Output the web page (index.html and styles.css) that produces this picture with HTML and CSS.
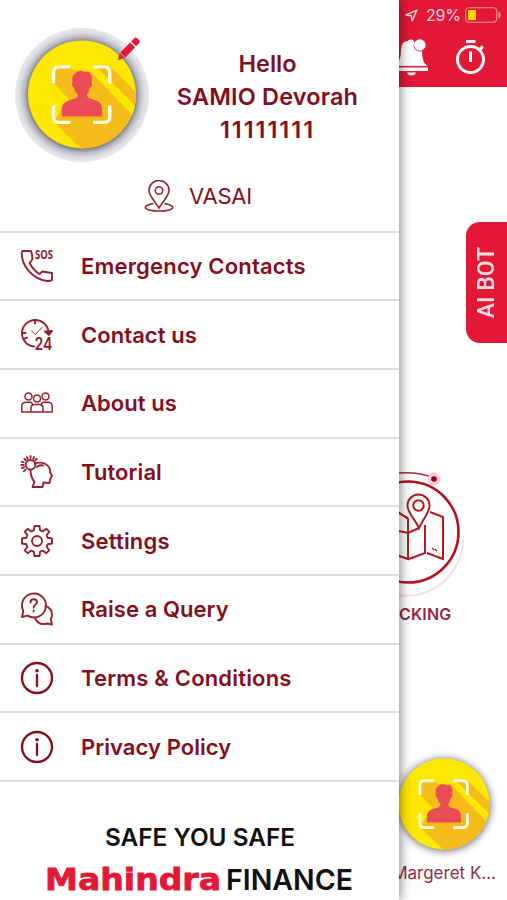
FILE: index.html
```html
<!DOCTYPE html>
<html lang="en">
<head>
<meta charset="utf-8">
<title>Menu</title>
<link rel="stylesheet" href="styles.css">
</head>
<body>
<svg class="defs" aria-hidden="true">
  <defs>
    <clipPath id="disc"><circle r="54"/></clipPath>
    <radialGradient id="halo" gradientUnits="userSpaceOnUse" cx="0" cy="0" r="68">
      <stop offset=".78" stop-color="#77777c"/>
      <stop offset=".85" stop-color="#b9b9c0"/>
      <stop offset=".92" stop-color="#dcdce3"/>
      <stop offset="1" stop-color="#ebebf0"/>
    </radialGradient>
    <g id="face">
      <circle r="54" fill="#ffe800"/>
      <g clip-path="url(#disc)" fill="#f5bb1b">
        <path d="M-28-28H-12L-8-24 8-24 62 30V70H16L-28 28-20 13-13 5-28-11Z"/>
        <path d="M14-28H28L60 4V28Z"/>
        <path d="M4-28H14L60 18V31Z" fill="#ffe800"/>
      </g>
      <path d="M-28.5-11V-22Q-28.5-27.5-23-27.5H-11.5M11-27.5H22Q27.700-27.500 27.700-22V-11M27.700 11V22.500Q27.700 28 22 28H11M-11.500 28H-23Q-28.500 28-28.500 22.500V11" fill="none" stroke="#fffbe0" stroke-width="3.400"/>
      <path d="M-20 22V14Q-20 8-13 6L-7 4Q-4 3-4 0-7-2-8-7-11-9-9.500-13-10.500-19-7-21-3-25 3-22 8-24 9-20 11-17 9.500-13 11-8 8-7 7-2 5 0 5 3 8 4L14 6Q20 8 20 14V22Z" fill="#e94c55"/>
    </g>
  </defs>
</svg>
<div class="screen">
  <aside class="drawer">
    <header class="profile">
      <div class="who">
        <svg class="avatar" viewBox="-68 -68 136 136">
          <circle r="67" fill="url(#halo)"/>
          <use href="#face" y="-.6"/>
          <g transform="translate(36 -35) rotate(-46)" fill="#e51636">
            <path d="M0 0 6-3.500V3.500Z"/><path d="M7-3.500H21V3.500H7ZM22.500-3.500H27Q29-3.500 29-1.500V1.500Q29 3.500 27 3.500H22.500Z"/>
          </g>
        </svg>
        <div class="greeting">
          <p class="hello">Hello</p>
          <p class="name">SAMIO Devorah</p>
          <p class="number">11111111</p>
        </div>
      </div>
      <div class="place">
        <svg class="pin" viewBox="0 0 32 32"><path d="M16 28C12 21 6 16 6 10.500a10 10 0 0 1 20 0C26 16 20 21 16 28Z"/><circle cx="16" cy="10.500" r="3.700"/><path d="M10.500 23.500C-3 26 1 31 16 31s19-5 5.500-7.500"/></svg>
        <span>VASAI</span>
      </div>
    </header>
    <nav class="menu">
      <a class="item">
        <svg class="icon" viewBox="0 0 32 32"><path d="M1.500 1H10Q12 7 11 10L8.500 13Q13 21 18.500 24L21.500 21.500 31 23V30Q30 31 26 31C11 29 0 15 .8 2Z"/><text class="sos" x="14" y="8.500" textLength="18" lengthAdjust="spacingAndGlyphs">SOS</text></svg>
        <span class="wide">Emergency Contacts</span>
      </a>
      <a class="item">
        <svg class="icon" viewBox="0 0 32 32"><path d="M13 27.500A13.300 13.300 0 1 1 27.500 13M14 1V4.500M1 14H4.500M3.800 19.500 6 18.700"/><path d="M10.500 12 14.500 15.500 21 8.500" class="thin"/><path d="M24 12.500 31 12 28 16Z" class="solid"/><text class="day" x="13.500" y="31" textLength="18" lengthAdjust="spacingAndGlyphs">24</text></svg>
        <span>Contact us</span>
      </a>
      <a class="item">
        <svg class="icon group" viewBox="0 0 32 32"><circle cx="7.500" cy="9.500" r="3.500"/><circle cx="16" cy="11.500" r="3.500"/><circle cx="24.500" cy="9.500" r="3.500"/><path d="M10 25H.8V19Q.8 15.200 5 15.200H10L11.500 17M22 25H31.200V19Q31.200 15.200 27 15.200H22L20.500 17M10 25V21Q10 17.500 14 17.500H18Q22 17.500 22 21V25Z"/></svg>
        <span>About us</span>
      </a>
      <a class="item">
        <svg class="icon" viewBox="0 0 32 32"><circle cx="9.500" cy="8.800" r="4.800"/><path d="M9.500 0V2M3.200 2.800 4.700 4.200M.3 9H2.600M2.800 15.200 4.500 13.700M14.300 4.200 15.800 2.800M6 1.200 6.800 3M13 1.200 12.300 3M.8 5.800 2.800 6.300M1 12 3 11.300"/><path d="M14 7.500Q19 5.500 24.500 8 29.500 11 29 16L31 20 29.500 22 28.500 27 22.500 26.500 21.500 31H11.500L13.500 26Q9.500 21 9.500 14"/><path d="M16 11Q18 8.500 22 9.500"/></svg>
        <span>Tutorial</span>
      </a>
      <a class="item">
        <svg class="icon" viewBox="0 0 32 32"><circle cx="16" cy="16" r="5"/><path d="M13.500 1H18.500L19.200 5.300 21.800 6.400 25.300 3.800 28.200 6.700 25.600 10.200 26.700 12.800 31 13.500V18.500L26.700 19.200 25.600 21.800 28.200 25.300 25.300 28.200 21.800 25.600 19.200 26.700 18.500 31H13.500L12.800 26.700 10.200 25.600 6.700 28.200 3.800 25.300 6.400 21.800 5.300 19.200 1 18.500V13.500L5.300 12.800 6.400 10.200 3.800 6.700 6.700 3.800 10.200 6.400 12.800 5.300Z"/></svg>
        <span class="wide">Settings</span>
      </a>
      <a class="item">
        <svg class="icon" viewBox="0 0 32 32"><path d="M1 24 2.300 18A12 12 0 1 1 6.500 22.600Z"/><path d="M24.300 13.200Q31 15 31 22 31 24 29.800 26L31 31.500 26 30.500Q17 33 13.800 24.300"/><path d="M9.500 9.500Q9.500 6.300 12.700 6.300 16 6.300 16 9.200 16 11 14 12 12.700 12.800 12.700 14.500M12.700 17.500V18.500"/></svg>
        <span>Raise a Query</span>
      </a>
      <a class="item">
        <svg class="icon info" viewBox="0 0 32 32"><circle cx="16" cy="16" r="15"/><path d="M16 13V24"/><circle class="dot" cx="16" cy="8.700" r="1.800"/></svg>
        <span class="wide">Terms &amp; Conditions</span>
      </a>
      <a class="item">
        <svg class="icon info" viewBox="0 0 32 32"><circle cx="16" cy="16" r="15"/><path d="M16 13V24"/><circle class="dot" cx="16" cy="8.700" r="1.800"/></svg>
        <span>Privacy Policy</span>
      </a>
    </nav>
    <footer class="brand">
      <svg class="brandmark" viewBox="0 0 399 118">
        <text class="slogan" x="105" y="64" textLength="190" lengthAdjust="spacingAndGlyphs">SAFE YOU SAFE</text>
        <text class="maker" x="45" y="108" textLength="176" lengthAdjust="spacingAndGlyphs">Mahindra</text>
        <text class="finance" x="226" y="108" textLength="127" lengthAdjust="spacingAndGlyphs">FINANCE</text>
      </svg>
    </footer>
  </aside>
  <main class="page">
    <div class="topbar">
      <div class="status">
        <svg class="locate" viewBox="0 0 12 12"><path d="M11 1 6.500 11 5.800 6.200 1 5.500Z"/></svg>
        <span>29%</span>
        <svg class="battery" viewBox="0 0 37 16"><rect x=".7" y=".7" width="31" height="14.600" rx="3.500"/><rect class="charge" x="3" y="3" width="8" height="10"/><path d="M34 5.500Q36.500 8 34 10.500Z"/></svg>
      </div>
      <div class="tools">
        <svg class="bell" viewBox="0 0 30 40"><path d="M12 1.500Q16 1.500 15 5.500A6 6 0 0 0 23 13Q23 25 28.500 28H-4Q2 24 2 12 2 3 9 3 9 1.500 12 1.500ZM-5 29.500H29V33H-5ZM8 34.500H17Q16 37.500 12.500 37.500 9 37.500 8 34.500Z"/><circle cx="20.800" cy="7" r="5.800"/></svg>
        <svg class="timer" viewBox="0 0 32 36"><circle cx="15.500" cy="20.500" r="13"/><path d="M11 2.500H20.500M15.500 12.500V23M25 10 28 7.500"/></svg>
      </div>
    </div>
    <div class="bot"><span>AI BOT</span></div>
    <section class="tracking">
      <svg class="map" viewBox="0 0 108 130">
        <path d="M-20 122A57 57 0 0 0 64 72" class="orbit"/>
        <circle cx="9" cy="65" r="50.500" class="ring"/>
        <path d="M0 6Q19 4.500 35 11" class="arc"/><circle cx="35" cy="12" r="6.500" class="glow"/><circle cx="35" cy="12" r="2.800" class="core"/>
        <path class="fold" d="M-8 86V40L9 52V92L-8 86M0 46 9 51M0 64 9 66 20 61M10 92 26 86V58M28 86 44 92V50L31 45"/>
        <path class="fold pinhead" d="M20 61C16 52 8.500 46 8.500 38.500a11 11 0 0 1 22 0C30.500 46 24 52 20 61Z"/><circle class="fold" cx="19.500" cy="38.500" r="5.200"/>
        <path class="fold marks" d="M33 81 35 83M36 82 38 84"/>
      </svg>
      <p class="caption"><span>TRACKING</span></p>
    </section>
    <section class="contact">
      <svg class="mini" viewBox="-64 -64 128 128"><use href="#face"/></svg>
      <p class="friend"><span>Margeret K...</span></p>
    </section>
  </main>
</div>
</body>
</html>
```
FILE: styles.css
```css
* { box-sizing: border-box; }
body { margin: 0; background: #fff; font-family: Inter, "Liberation Sans", sans-serif; }
p { margin: 0; }
svg { display: block; flex: none; }
.defs { width: 0; height: 0; position: absolute; }
.screen { display: flex; width: 507px; height: 900px; overflow: hidden; }
.drawer { width: 399px; height: 900px; flex: none; display: flex; flex-direction: column; background: #fff; box-shadow: 0 0 12px rgba(0,0,0,.58); z-index: 1; color: #850d20; }
.profile { height: 230.500px; flex: none; }
.who { display: flex; padding: 27px 0 0 14px; height: 172px; }
.avatar { width: 136px; height: 136px; overflow: visible; }
.greeting { flex: 1; padding: 20px 14px 0 0; text-align: center; font-size: 23.500px; font-weight: 600; line-height: 33px; white-space: nowrap; }
.name { letter-spacing: .15px; }
.number { letter-spacing: 1.950px; }
.place { display: flex; align-items: center; gap: 14px; height: 48px; padding-left: 143px; font-size: 22px; letter-spacing: -.2px; }
.pin { width: 32px; height: 32px; fill: none; stroke: #932536; stroke-width: 1.6; }
.menu { flex: none; border-top: 2px solid #dedede; }
.item { display: flex; align-items: center; height: 68.7px; padding: 0 0 0 21px; border-bottom: 2px solid #dedede; gap: 28px; font-size: 22px; font-weight: 600; letter-spacing: .06px; white-space: nowrap; }
.wide { letter-spacing: .18px; }
.icon { width: 32px; height: 32px; fill: none; stroke: #962131; stroke-width: 1.9; stroke-linejoin: round; stroke-linecap: round; overflow: visible; }
.icon text { fill: #8f1729; stroke: none; letter-spacing: 0; }
.sos { font: bold 12px "Open Sans", sans-serif; }
.day { font: 600 17px Inter, sans-serif; }
.icon .thin { stroke-width: 1; }
.solid { fill: #962131; }
.group { stroke-width: 1.5; }
.info { stroke: #850d20; stroke-width: 2.3; }
.info .dot { fill: #850d20; stroke: none; }
.brand { flex: 1; min-height: 0; }
.brandmark { width: 399px; height: 118px; }
.slogan { font: 600 24px Inter, sans-serif; fill: #111; }
.maker { font: bold 31px "DejaVu Sans", sans-serif; fill: #e31837; stroke: #e31837; stroke-width: .8; }
.finance { font: 600 29px Inter, sans-serif; fill: #111; }
.page { width: 108px; height: 900px; flex: none; overflow: hidden; background: #fff; }
.topbar { height: 87px; background: #e31837; }
.status { display: flex; align-items: center; height: 30px; padding-left: 6px; color: #fbdadd; font-size: 16px; letter-spacing: -.2px; }
.locate { width: 13px; height: 13px; margin-right: 8px; fill: none; stroke: #fbdadd; stroke-width: 1.3; stroke-linejoin: round; }
.battery { width: 37px; height: 16px; margin-left: 4px; fill: none; stroke: #f5929c; stroke-width: 1.1; }
.battery .charge { fill: #ffd500; stroke: none; }
.tools { display: flex; gap: 26px; padding-top: 8px; }
.bell { width: 30px; height: 40px; fill: #fff; }
.timer { width: 32px; height: 36px; margin-top: 1px; fill: none; stroke: #fff; stroke-width: 3; }
.bot { width: 41px; height: 121px; margin: 135px 0 0 67px; display: flex; align-items: center; justify-content: center; border-radius: 14px 0 0 14px; background: #e31837; color: #fbdde1; }
.bot span { writing-mode: vertical-rl; transform: rotate(180deg); font: 500 23px Roboto, sans-serif; }
.tracking { margin-top: 124px; height: 165px; }
.map { width: 108px; height: 130px; fill: none; }
.orbit { stroke: #f6dfe4; stroke-width: 2; }
.ring { stroke: #b80f1e; stroke-width: 2.6; }
.arc { stroke: #a52c34; stroke-width: 1.5; }
.glow { fill: #f9c6ce; }
.core { fill: #78101f; }
.fold { stroke: #b01b22; stroke-width: 2; }
.pinhead { fill: #fff; }
.marks { stroke-width: 1.5; }
.caption { display: flex; justify-content: flex-end; width: 52.500px; margin-top: 7px; color: #962744; font-size: 16px; font-weight: 600; line-height: 20px; letter-spacing: .2px; }
.contact { margin-top: 117.500px; }
.mini { width: 108px; height: 108px; margin-left: -9px; overflow: visible; }
.mini use { filter: drop-shadow(0 1px 5px rgba(0,0,0,.65)); }
.friend { display: flex; justify-content: flex-end; width: 97px; margin-top: 4px; color: #922b49; font-size: 17px; line-height: 22px; white-space: nowrap; }
```
